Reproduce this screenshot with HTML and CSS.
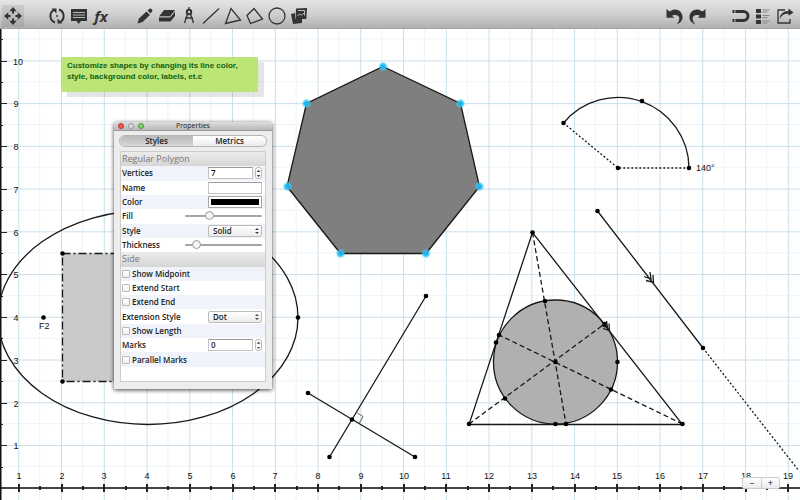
FILE: index.html
```html
<!DOCTYPE html>
<html lang="en">
<head>
<meta charset="utf-8">
<title>Geometry</title>
<link rel="stylesheet" href="styles.css">
</head>
<body>
<header class="toolbar">
  <div class="group">
    <button class="tool active" aria-label="Move"><svg viewBox="0 0 22 22"><path class="solid" d="M11 2l3.700 4.300H7.300zM11 20l3.700-4.300H7.300zM2 11l4.300-3.700v7.400zM20 11l-4.300-3.700v7.400z"/><path class="thick" d="M11 6v2.500M11 13.500V16M6 11h2.500M13.500 11H16"/></svg></button>
  </div>
  <div class="group">
    <button class="tool" aria-label="Rotate"><svg viewBox="0 0 22 22"><path class="thick" d="M8 4.800A7 7 0 0 0 9 17.500M14 17.200A7 7 0 0 0 13 4.500"/><path class="solid" d="M5.500 3.500h5v5zM16.500 18.500h-5v-5z"/><circle class="solid" cx="11" cy="11" r="1"/></svg></button>
    <button class="tool" aria-label="Comment"><svg viewBox="0 0 22 22"><path class="solid" d="M3 4h16v12h-6l-2.500 3-2-3H3z"/><path class="light" d="M5 7.500h12M5 10h12M5 12.500h12"/></svg></button>
    <button class="tool formula" aria-label="Formula">fx</button>
  </div>
  <div class="group">
    <button class="tool" aria-label="Pencil"><svg viewBox="0 0 22 22"><path class="solid" d="M3.500 18.500l1.500-5 7.500-7 3.500 3.500-7.500 7zM13.500 5.500l2-1.800q1-.7 2.200.5t.5 2.200l-1.700 2z"/></svg></button>
    <button class="tool" aria-label="Eraser"><svg viewBox="0 0 22 22"><path class="solid" d="M8 5h11l-5 6.500H3zM3 12h11.300l4.700-6v5l-4.500 5.500H3z"/><path class="light" d="M3 12h11.300L19 6"/></svg></button>
    <button class="tool" aria-label="Compass"><svg viewBox="0 0 22 22"><path d="M11 2v3M9.500 9L6.500 18M12.500 9l3 9M7 13h8"/><circle class="thick" cx="11" cy="7" r="2.200"/></svg></button>
    <button class="tool" aria-label="Line"><svg viewBox="0 0 22 22"><path d="M3 18.500L19 3.500"/></svg></button>
    <button class="tool" aria-label="Triangle"><svg viewBox="0 0 22 22"><path d="M9 3.500L3.500 18.500l15-3.500z"/></svg></button>
    <button class="tool" aria-label="Polygon"><svg viewBox="0 0 22 22"><path d="M10 3.500l-7 7 3.500 8 12-4.500z"/></svg></button>
    <button class="tool" aria-label="Circle"><svg viewBox="0 0 22 22"><circle cx="11" cy="11" r="8"/></svg></button>
    <button class="tool" aria-label="Images"><svg viewBox="0 0 22 22"><path class="solid" d="M3 9l4-1v6h7v4l-9 1zM8 3.500l11-.5-.7 11H7.500z"/><path class="light" d="M10 5.500h6.500v5M9.500 11l2-2 2 1 3-2"/></svg></button>
  </div>
  <div class="group end">
    <button class="tool" aria-label="Undo"><svg viewBox="0 0 22 22"><path class="solid" d="M2.500 4l3 2.500c7-5 13 0 13 5.500 0 4-2.500 6-6 7.500 4.500-5 3.500-9.500-1.500-9.500-1.500 0-2 .3-3 .7l2.500 2H2.500z"/></svg></button>
    <button class="tool" aria-label="Redo"><svg viewBox="0 0 22 22"><path class="solid" d="M19.500 4l-3 2.500c-7-5-13 0-13 5.500 0 4 2.500 6 6 7.500-4.500-5-3.500-9.500 1.500-9.500 1.500 0 2 .3 3 .7l-2.500 2h8z"/></svg></button>
  </div>
  <div class="group">
    <button class="tool" aria-label="Snap"><svg viewBox="0 0 22 22"><path class="magnet" d="M2.500 6.500h11a4.500 4.500 0 0 1 0 9h-11"/><path class="light" d="M5 4.500v4M5 13.500v4"/></svg></button>
    <button class="tool" aria-label="List"><svg viewBox="0 0 22 22"><path class="solid" d="M4 4h5v4H4zM4 9.500h5v4H4zM4 15h5v4H4z"/><path class="faint" d="M10.500 5h7M10.500 7h5M10.500 10.500h7M10.500 12.500h5M10.500 16h7M10.500 18h5"/></svg></button>
    <button class="tool" aria-label="Share"><svg viewBox="0 0 22 22"><path d="M11 5H4v13h12v-4"/><path class="solid" d="M5.500 14q1-8 9-8V3.500L19.500 7.500l-5 3.200V8.700q-6-.5-9 5.300z"/></svg></button>
  </div>
</header>
<main class="board">
  <svg class="drawing" aria-label="Drawing">
    <defs>
      <pattern id="grid" x="18.300" y="60.400" width="42.750" height="42.730" patternUnits="userSpaceOnUse">
        <path class="minor" d="M21.400 0v43M0 21.400h43"/>
        <path class="major" d="M.5 0v43M0 .5h43"/>
      </pattern>
      <radialGradient id="glow">
        <stop offset="0.300" stop-color="#19b4ee"/>
        <stop offset="0.600" stop-color="#35c3f5" stop-opacity="0.800"/>
        <stop offset="1" stop-color="#5cd3ff" stop-opacity="0"/>
      </radialGradient>
    </defs>
    <g transform="translate(0 -29)">
      <rect width="100%" height="110%" fill="url(#grid)"/>
      <g id="axes" class="axes"></g>
      <g class="shapes">
        <ellipse cx="148" cy="317.500" rx="150" ry="107"/>
        <rect class="dashdot" x="62.500" y="253.500" width="150" height="128"/>
        <path class="dark" d="M383 66.500l77.500 37 19 83-53.500 67h-85.500l-53.500-67 19.500-83z"/>
        <path d="M689 168A71 71 0 0 0 563.500 123"/>
        <path class="dotted" d="M563.500 123L618 168h71"/>
        <path d="M597.500 211L703 348M644 276.500l7 2.500-1-7M646 280.500l7.500 2-.5-7.500"/>
        <path class="dotted" d="M703 348l96 123"/>
        <circle class="mid" cx="555.500" cy="362" r="62"/>
        <path d="M532.500 232.500L469 424.500h213.500zM601 325.500l6.500 2-1-6.500M603 328.500l6.500 2-.5-7"/>
        <path class="dashed" d="M532.500 232.500L566 424M469 424l135.500-100M682.500 424L499 335"/>
        <path d="M426 296l-96.500 161M308 393l107 64"/>
        <path class="thin" d="M356.500 412.500l6.500 4-3.500 6.500"/>
      </g>
      <g id="points" class="points"></g>
      <text class="caption" x="39" y="329">F2</text>
      <text class="caption" x="696" y="171">140°</text>
    </g>
  </svg>

  <p class="note">Customize shapes by changing its line color, style, background color, labels, et.c</p>

  <section class="palette" aria-label="Properties">
    <div class="titlebar">
      <span class="lights"><i class="red"></i><i></i><i class="green"></i></span>
      <h1>Properties</h1>
    </div>
    <div class="tabs"><button class="on">Styles</button><button>Metrics</button></div>
    <form class="list">
      <fieldset>
        <h2>Regular Polygon</h2>
        <div class="row"><label for="vertices">Vertices</label><input id="vertices" class="number" value="7"><span class="stepper"><button type="button" aria-label="More vertices"></button><button type="button" aria-label="Fewer vertices"></button></span></div>
        <div class="row"><label for="name">Name</label><input id="name" class="wide"></div>
        <div class="row"><label for="color">Color</label><input id="color" class="wide" type="color" value="#000000"></div>
        <div class="row"><label for="fill">Fill</label><input id="fill" type="range" value="30"></div>
        <div class="row"><label for="style">Style</label><span class="pick"><select id="style"><option>Solid</option><option>Dash</option></select></span></div>
        <div class="row"><label for="thickness">Thickness</label><input id="thickness" type="range" value="11"></div>
      </fieldset>
      <fieldset>
        <h2>Side</h2>
        <div class="row"><input id="midpoint" type="checkbox"><label for="midpoint">Show Midpoint</label></div>
        <div class="row"><input id="start" type="checkbox"><label for="start">Extend Start</label></div>
        <div class="row"><input id="end" type="checkbox"><label for="end">Extend End</label></div>
        <div class="row"><label for="extension">Extension Style</label><span class="pick"><select id="extension"><option>Dot</option><option>Dash</option></select></span></div>
        <div class="row"><input id="length" type="checkbox"><label for="length">Show Length</label></div>
        <div class="row"><label for="marks">Marks</label><input id="marks" class="number" value="0"><span class="stepper"><button type="button" aria-label="More marks"></button><button type="button" aria-label="Fewer marks"></button></span></div>
        <div class="row"><input id="parallel" type="checkbox"><label for="parallel">Parallel Marks</label></div>
      </fieldset>
    </form>
  </section>

  <div class="zoom"><button aria-label="Zoom out">−</button><button aria-label="Zoom in">+</button></div>
</main>
<script src="board.js"></script>
</body>
</html>
```
FILE: styles.css
```css
* { box-sizing: border-box; }
body {
  margin: 0;
  height: 100vh;
  display: flex;
  flex-direction: column;
  overflow: hidden;
  background: #fff;
  font-family: "Liberation Sans", Arial, sans-serif;
}
button, input, select { font: inherit; color: inherit; margin: 0; padding: 0; border: 0; }

.toolbar {
  display: flex;
  gap: 22px;
  align-items: center;
  height: 29px;
  padding: 3px 4px 0 2px;
  background: linear-gradient(#e4e4e4, #cfcfcf 50%, #b1b1b1);
  border-bottom: 1px solid #a2a2a2;
}
.group { display: flex; }
.end { margin-left: auto; }
.tool { width: 22px; height: 22px; background: none; color: #333; }
.tool svg { display: block; width: 22px; height: 22px; fill: none; stroke: #333; stroke-width: 1.3; }
.active { background: rgba(0, 0, 0, .08); }
.tool .solid { fill: #333; stroke: none; }
.tool .thick { stroke-width: 2; }
.tool .magnet { stroke-width: 3; }
.tool .light { stroke: #bbb; stroke-width: 1; }
.tool .faint { stroke: #888; stroke-width: 1; }
.formula { font: italic bold 15px/20px "Open Sans", sans-serif; }

.board { position: relative; flex: 1; overflow: hidden; }
.drawing { position: absolute; width: 100%; height: 100%; }
.minor { stroke: #edf4f8; }
.major { stroke: #c9dfeb; }
.axes { stroke: #222; }
.axes text, .caption { stroke: none; fill: #111; font-size: 9px; }
.axes text { text-anchor: middle; }
.axes .line-x { stroke: #444; stroke-width: 2; }
.axes .line-y { stroke: #111; stroke-width: 3; }
.axes .tick { stroke-width: 2; }
.shapes { fill: none; stroke: #181818; stroke-width: 1.3; }
.shapes .dashdot { fill: #cacaca; stroke-dasharray: 8 3 2 3; }
.shapes .dark { fill: #7f7f7f; }
.shapes .mid { fill: #b0b0b0; }
.shapes .dotted { stroke-dasharray: 2 2; }
.shapes .dashed { stroke-dasharray: 5 3; }
.shapes .thin { stroke: #666; stroke-width: 1; }
.points .vertex { fill: url(#glow); }

.note {
  position: absolute;
  left: 61px;
  top: 28px;
  width: 197px;
  height: 35px;
  margin: 0;
  padding: 3px 6px;
  background: #bce476;
  box-shadow: 6px 5px 0 rgba(0, 0, 0, .1);
  color: #116011;
  font-size: 8px;
  line-height: 11px;
  font-weight: bold;
}

.palette {
  position: absolute;
  left: 114px;
  top: 93px;
  width: 158px;
  padding-bottom: 7px;
  background: #ededed;
  border-radius: 3px 3px 0 0;
  box-shadow: 0 1px 4px rgba(0, 0, 0, .75);
  font: 600 8px/12px "Open Sans", sans-serif;
  color: #222;
}
.titlebar {
  display: flex;
  align-items: center;
  height: 9px;
  padding: 0 4px;
  background: linear-gradient(#dedede, #b8b8b8);
  border-bottom: 1px solid #999;
  border-radius: 3px 3px 0 0;
}
.titlebar h1 { flex: 1; margin: 0 26px 0 0; text-align: center; font-size: 7px; line-height: 8px; font-weight: 400; }
.lights { display: flex; gap: 4px; width: 26px; }
.lights i { width: 6px; height: 6px; border-radius: 50%; background: #ddd; border: 1px solid #999; }
.lights .red { background: #ee5a54; border-color: #b33; }
.lights .green { background: #86cf6b; border-color: #4d9638; }
.tabs { display: flex; margin: 5px 6px; height: 10px; border-radius: 5px; box-shadow: 0 0 0 1px #b5b5b5; background: linear-gradient(#fff, #ececec); overflow: hidden; }
.tabs button { flex: 1; background: none; line-height: 10px; }
.tabs .on { background: linear-gradient(#b9b9b9, #d6d6d6); }
.list {
  display: grid;
  grid-template-rows: repeat(16, 1fr);
  height: 231px;
  margin: 0 6px;
  background: #fff;
  border: 1px solid #ccc;
}
.list fieldset { display: contents; }
.list h2 { margin: 0; padding: 0 1px; color: #777; font-size: 9px; line-height: 14px; font-weight: 400; background: linear-gradient(#ececec, #d6d6d6); }
.row { display: flex; align-items: center; gap: 2px; min-height: 0; padding: 0 3px 0 1px; }
.row:nth-child(even) { background: #f0f4fa; }
.row > label:first-child { flex: 1; white-space: nowrap; }
.number, .wide { width: 54px; height: 12px; padding: 0 2px; border: 1px solid #c4c4c4; border-top-color: #999; background: #fff; }
.number { width: 45px; }
.wide[type=color] { padding: 2px; border-color: #aaa; }
.wide::-webkit-color-swatch-wrapper { padding: 0; }
.wide::-webkit-color-swatch { border: 0; border-radius: 0; }
.stepper { display: flex; flex-direction: column; align-items: center; justify-content: space-around; width: 7px; height: 12px; border: 1px solid #bbb; border-radius: 3px; background: #fafafa; }
.stepper button { width: 4px; height: 2px; background: #444; clip-path: polygon(50% 0, 100% 100%, 0 100%); }
.stepper button + button { clip-path: polygon(0 0, 100% 0, 50% 100%); }
.pick { position: relative; width: 54px; height: 12px; }
.pick select { appearance: none; display: block; width: 100%; height: 12px; padding: 0 4px; line-height: 10px; border: 1px solid #bbb; border-radius: 2px; background: linear-gradient(#fff, #ebebeb); }
.pick::before, .pick::after { content: ""; position: absolute; right: 3px; top: 3px; border: 2px solid transparent; border-top: 0; border-bottom: 2px solid #444; pointer-events: none; }
.pick::after { top: 7px; border-top: 2px solid #444; border-bottom: 0; }
input[type=range] { appearance: none; width: 77px; height: 10px; background: none; }
input[type=range]::-webkit-slider-runnable-track { height: 2px; background: #a5a5a5; border-radius: 1px; }
input[type=range]::-webkit-slider-thumb { appearance: none; width: 9px; height: 9px; margin-top: -4px; border: 1px solid #999; border-radius: 50%; background: #f4f4f4; }
input[type=checkbox] { appearance: none; width: 8px; height: 8px; border: 1px solid #bbb; border-radius: 1px; background: linear-gradient(#fff, #f0f0f0); }

.zoom { position: absolute; right: 20px; bottom: 11px; display: flex; background: linear-gradient(#fff, #ececec); border: 1px solid #ccc; border-radius: 2px; }
.zoom button { width: 18px; height: 10px; background: none; font-size: 9px; line-height: 9px; color: #222; }
.zoom button + button { border-left: 1px solid #ccc; }
```
FILE: board.js
```js
const NS = "http://www.w3.org/2000/svg";
const axes = document.getElementById("axes");
const points = document.getElementById("points");

function add(parent, tag, attrs, text) {
  const el = document.createElementNS(NS, tag);
  for (const key in attrs) el.setAttribute(key, attrs[key]);
  if (text !== undefined) el.textContent = text;
  parent.appendChild(el);
}

const UNIT = 42.75;
const BASE = 488;
const X0 = -24;

add(axes, "path", { class: "line-x", d: `M0 ${BASE}H${window.innerWidth}` });
add(axes, "path", { class: "line-y", d: "M0 29V1000" });

for (let n = 0.5; X0 + n * UNIT < window.innerWidth - 6; n += 0.5) {
  const x = Math.round(X0 + n * UNIT);
  const whole = Number.isInteger(n);
  if (x < 3) continue;
  add(axes, "path", { class: "tick", d: whole ? `M${x} 484v8` : `M${x} 486v4` });
  if (whole) add(axes, "text", { x, y: 479 }, n);
}

for (let n = 0.5; BASE - n * UNIT > 30; n += 0.5) {
  const y = Math.round(BASE - n * UNIT);
  const whole = Number.isInteger(n);
  add(axes, "path", { d: `M0 ${y + 0.5}h${whole ? 7 : 3}` });
  if (whole) add(axes, "text", { x: n < 10 ? 16 : 18, y: y + 4 }, n);
}

const dots = [
  [298, 317.5], [43.5, 317.5], [62.5, 253.5], [62.5, 381.5],
  [563.5, 123], [642, 101], [618, 168], [689, 168], [597.5, 211], [703, 348],
  [532.5, 232.5], [469, 424], [682.5, 424], [545, 301], [499, 335], [496, 342.5],
  [604.5, 324], [617.5, 362], [611, 389.5], [505, 398.5], [555.5, 424], [566, 424],
  [555.5, 362], [426, 296], [329.5, 457], [308, 393], [415, 457], [352, 419.5]
];
for (const [cx, cy] of dots) add(points, "circle", { cx, cy, r: 2.3 });

const vertices = [
  [383, 66.5], [460.5, 103.5], [479.5, 186.5], [426, 253.5],
  [340.5, 253.5], [287.5, 186.5], [306.5, 103.5]
];
for (const [cx, cy] of vertices) add(points, "circle", { class: "vertex", cx, cy, r: 5 });
```
